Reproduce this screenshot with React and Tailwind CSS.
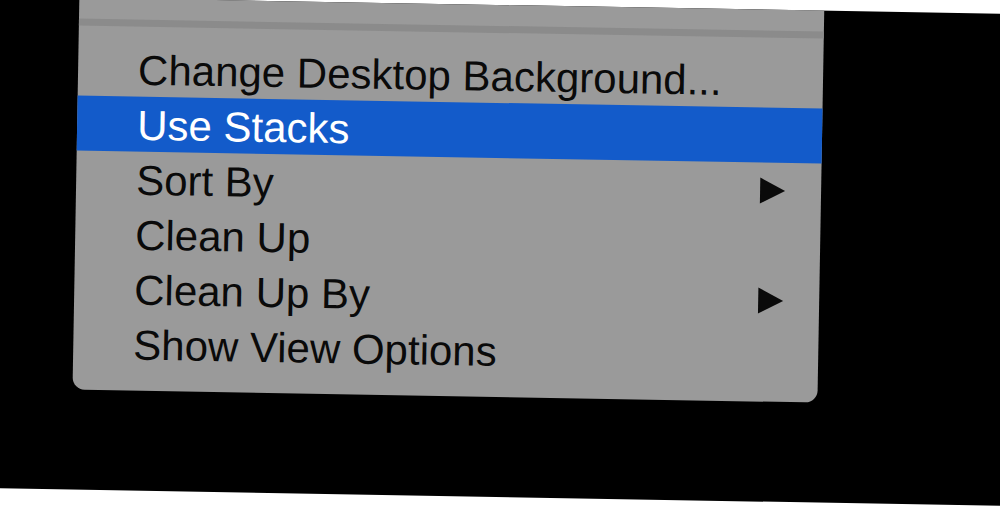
const items = [
  { label: "Change Desktop Background..." },
  { label: "Use Stacks", active: true },
  { label: "Sort By", submenu: true },
  { label: "Clean Up" },
  { label: "Clean Up By", submenu: true },
  { label: "Show View Options" },
];

function Arrow() {
  return (
    <svg width="27" height="28" viewBox="0 0 27 28" className="shrink-0">
      <path d="M1 1 L26 14 L1 27 Z" fill="#0a0a0a" />
    </svg>
  );
}

export default function App() {
  return (
    <div className="w-[1000px] h-[507px] bg-white overflow-hidden font-['Liberation_Sans',Arial,sans-serif]">
      <div className="w-[1060px] h-[492px] -ml-[30px] mt-[5px] bg-black rotate-[1deg]">
        {/* context menu */}
        <div className="ml-[105px] w-[745px] h-[392px] bg-[#9a9a9a] rounded-b-[12px] pt-[21px] pb-[16px]">
          <div className="h-[7px] bg-[#8b8b8b]" />
          <div className="mt-[15px]">
            {items.map((item) => (
              <div
                key={item.label}
                className={
                  "h-[55px] flex items-center justify-between pl-[60px] pr-[35px] text-[42px] leading-[55px] " +
                  (item.active ? "bg-[#135bca] text-white" : "text-[#0a0a0a]")
                }
              >
                <span className="whitespace-nowrap pt-[2px]">{item.label}</span>
                {item.submenu && <Arrow />}
              </div>
            ))}
          </div>
        </div>
      </div>
    </div>
  );
}
